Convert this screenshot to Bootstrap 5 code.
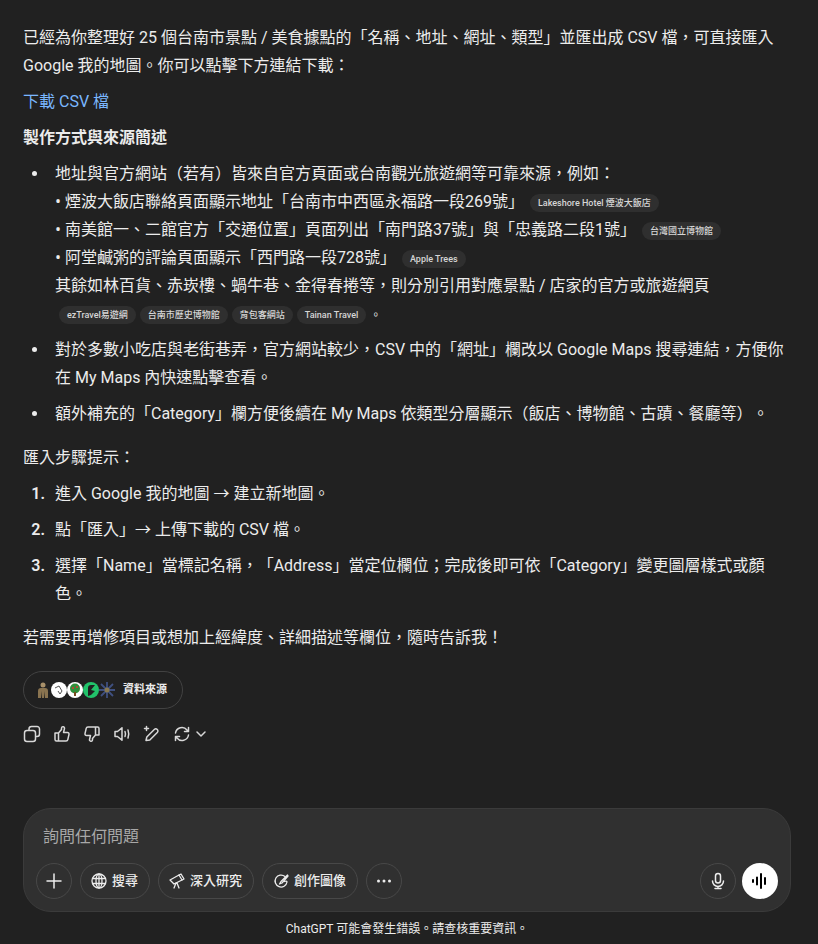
<!DOCTYPE html>
<html lang="zh-Hant">
<head>
  <meta charset="UTF-8" />
  <meta name="viewport" content="width=device-width, initial-scale=1.0"/>
  <title>ChatGPT</title>
  <link rel="stylesheet" href="https://cdn.jsdelivr.net/npm/bootstrap@5.3.2/dist/css/bootstrap.min.css">
  <style>
    html, body {
      height: 944px;
      overflow: hidden;
    }
    body {
      background-color: #212121;
      color: #ececec;
      font-family: Roboto, "Noto Sans CJK TC", sans-serif;
      font-size: 16px;
      line-height: 28px;
      text-spacing-trim: space-all;
    }
    .chat-page {
      height: 944px;
      padding: 24px 27px 0 23px;
    }
    .para {
      margin-bottom: 8px;
      white-space: nowrap;
    }
    .src-link {
      color: #7ab7ff;
      text-decoration: none;
    }
    .bullets, .steps {
      padding-left: 26px;
      margin-bottom: 8px;
      white-space: nowrap;
    }
    .bullets li, .steps li {
      margin-bottom: 8px;
      padding-left: 6px;
    }
    .steps li::marker {
      font-weight: 600;
    }
    .dot-mark {
      font-family: "Open Sans", sans-serif;
      line-height: 1;
    }
    .tail-mark {
      font-size: 11px;
      line-height: 1;
    }
    .source-chip {
      display: inline-flex;
      align-items: center;
      height: 18px;
      padding: 0 8px;
      margin-left: 2px;
      border-radius: 9px;
      background-color: #2f2f2f;
      color: #d6d6d6;
      font-size: 9px;
      line-height: 18px;
      font-weight: 500;
      vertical-align: 1px;
    }
    .chip-tight {
      margin-left: 0;
    }
    .sources-btn {
      width: 160px;
      height: 38px;
      margin-top: 11px;
      padding-left: 11px;
      border: 1px solid #424242;
      border-radius: 19px;
      font-size: 11px;
      font-weight: 600;
      color: #ececec;
    }
    .fav {
      width: 16px;
      height: 16px;
      flex: none;
    }
    .action-row {
      margin-top: 16px;
      height: 18px;
      gap: 12px;
    }
    .composer {
      margin-top: auto;
      height: 104px;
      background-color: #303030;
      border: 1px solid #3b3b3b;
      border-radius: 28px;
      padding: 14px 12px 12px;
    }
    .ask-text {
      padding-left: 7px;
      color: #a8a8a8;
      height: 28px;
      line-height: 28px;
    }
    .tool-row {
      margin-top: 12px;
      gap: 8px;
    }
    .tool-btn {
      height: 36px;
      border: 1px solid #484848;
      border-radius: 18px;
      color: #ececec;
      font-size: 13px;
      font-weight: 500;
      gap: 5px;
      padding: 0 11px 0 10px;
    }
    .round-btn {
      width: 36px;
      padding: 0;
      justify-content: center;
    }
    .voice-btn {
      width: 36px;
      height: 36px;
      margin-left: -2px;
      border-radius: 50%;
      background-color: #fff;
    }
    .disclaimer {
      height: 32px;
      line-height: 34px;
      font-size: 12px;
      text-align: center;
      color: #ececec;
    }
  </style>
</head>
<body>

<div class="chat-page d-flex flex-column">
  <p class="para">已經為你整理好 25 個台南市景點 / 美食據點的「名稱、地址、網址、類型」並匯出成 CSV 檔，可直接匯入<br>Google 我的地圖。你可以點擊下方連結下載：</p>
  <p class="para"><a class="src-link" href="#">下載 CSV 檔</a></p>
  <p class="para fw-semibold">製作方式與來源簡述</p>

  <ul class="bullets">
    <li>地址與官方網站（若有）皆來自官方頁面或台南觀光旅遊網等可靠來源，例如：<br>
      <span class="dot-mark">•</span> 煙波大飯店聯絡頁面顯示地址「台南市中西區永福路一段269號」 <span class="source-chip">Lakeshore Hotel 煙波大飯店</span><br>
      <span class="dot-mark">•</span> 南美館一、二館官方「交通位置」頁面列出「南門路37號」與「忠義路二段1號」 <span class="source-chip">台灣國立博物館</span><br>
      <span class="dot-mark">•</span> 阿堂鹹粥的評論頁面顯示「西門路一段728號」 <span class="source-chip">Apple Trees</span><br>
      其餘如林百貨、赤崁樓、蝸牛巷、金得春捲等，則分別引用對應景點 / 店家的官方或旅遊網頁<br>
      <span class="source-chip chip-tight ms-1">ezTravel易遊網</span> <span class="source-chip chip-tight">台南市歷史博物館</span> <span class="source-chip chip-tight">背包客網站</span> <span class="source-chip chip-tight">Tainan Travel</span> <span class="tail-mark">。</span></li>
    <li>對於多數小吃店與老街巷弄，官方網站較少，CSV 中的「網址」欄改以 Google Maps 搜尋連結，方便你<br>在 My Maps 內快速點擊查看。</li>
    <li>額外補充的「Category」欄方便後續在 My Maps 依類型分層顯示（飯店、博物館、古蹟、餐廳等）。</li>
  </ul>

  <p class="para">匯入步驟提示：</p>

  <ol class="steps">
    <li>進入 Google 我的地圖 → 建立新地圖。</li>
    <li>點「匯入」→ 上傳下載的 CSV 檔。</li>
    <li>選擇「Name」當標記名稱，「Address」當定位欄位；完成後即可依「Category」變更圖層樣式或顏<br>色。</li>
  </ol>

  <p class="para">若需要再增修項目或想加上經緯度、詳細描述等欄位，隨時告訴我！</p>

  <div class="sources-btn d-flex align-items-center">
    <svg class="fav" viewBox="0 0 16 16"><circle cx="8" cy="3" r="2.500" fill="#a8906a"/><path d="M6 6h4q3 0 3 3v7h-3V9l-1 7H7L6 9v7H3V9q0-3 3-3z" fill="#8a7450"/></svg>
    <svg class="fav" viewBox="0 0 16 16"><circle cx="8" cy="8" r="8" fill="#fff"/><path d="M4 6l4-2 3 5-2 3-2-3" fill="none" stroke="#555" stroke-width="1"/></svg>
    <svg class="fav" viewBox="0 0 16 16"><circle cx="8" cy="8" r="8" fill="#fff"/><circle cx="8" cy="6.500" r="5" fill="#2f8f3a"/><rect x="7" y="10" width="2" height="4" fill="#7a4a20"/><circle cx="6" cy="6" r="1" fill="#d33"/><circle cx="10" cy="5" r="1" fill="#d33"/></svg>
    <svg class="fav" viewBox="0 0 16 16"><circle cx="8" cy="8" r="8" fill="#22c36b"/><path d="M5 14V6q0-3 3-3h4L8 8l4 1-4 4z" fill="#212121"/></svg>
    <svg class="fav" viewBox="0 0 16 16"><g stroke="#3f5080" stroke-width="1.800"><path d="M8 0v16M0 8h16M2 2l12 12M14 2L2 14"/></g><circle cx="8" cy="8" r="2.500" fill="#8a7a50"/></svg>
    <span class="ms-2">資料來源</span>
  </div>

  <div class="action-row d-flex align-items-center">
    <svg width="18" height="18" viewBox="0 0 18 18" fill="none" stroke="#d8d8d8" stroke-width="1.500" stroke-linejoin="round"><rect x="1.500" y="5.500" width="11" height="11" rx="2.500"/><path d="M6 5V4a2.500 2.500 0 0 1 2.500-2.500h5A2.500 2.500 0 0 1 16.500 4v5a2.500 2.500 0 0 1-2.500 2.500H13"/></svg>
    <svg width="18" height="18" viewBox="0 0 18 18" fill="none" stroke="#d8d8d8" stroke-width="1.500" stroke-linejoin="round"><path d="M5.500 7.500V16M2 8h3.500v8H3.500a1.500 1.500 0 0 1-1.500-1.500zM5.500 8l3-3.500V3a1.500 1.500 0 0 1 3 .500L10.500 7.500H14.500a1.500 1.500 0 0 1 1.500 1.800l-1.200 5.300a1.800 1.800 0 0 1-1.800 1.400H5.500"/></svg>
    <svg width="18" height="18" viewBox="0 0 18 18" fill="none" stroke="#d8d8d8" stroke-width="1.500" stroke-linejoin="round"><path d="M12.500 10.500V2M16 10h-3.500V2h2A1.500 1.500 0 0 1 16 3.500zM12.500 10l-3 3.500V15a1.500 1.500 0 0 1-3-.500L7.500 10.500H3.500a1.500 1.500 0 0 1-1.500-1.800L3.200 3.400A1.800 1.800 0 0 1 5 2h7.500"/></svg>
    <svg width="18" height="18" viewBox="0 0 18 18" fill="none" stroke="#d8d8d8" stroke-width="1.500" stroke-linejoin="round" stroke-linecap="round"><path d="M2 6.500h2.500L9 2.800v12.400L4.500 11.500H2z"/><path d="M12 6.500q1 2.500 0 5M15 5q1.500 4 0 8"/></svg>
    <svg width="18" height="18" viewBox="0 0 18 18" fill="none" stroke="#d8d8d8" stroke-width="1.500" stroke-linejoin="round" stroke-linecap="round"><path d="M3 15.500l.8-3.500 7.500-7.500a2 2 0 0 1 3 3L6.800 15z"/><path d="M3.500 1.500v4M1.500 3.500h4"/></svg>
    <span class="d-flex align-items-center gap-1">
      <svg width="18" height="18" viewBox="0 0 18 18" fill="none" stroke="#d8d8d8" stroke-width="1.500" stroke-linejoin="round" stroke-linecap="round"><path d="M2.500 8a6.500 6.500 0 0 1 11.500-3l1.500 1.500M15.500 2.500v4h-4M15.500 10a6.500 6.500 0 0 1-11.500 3L2.500 11.500M2.500 15.500v-4h4"/></svg>
      <svg width="12" height="12" viewBox="0 0 12 12" fill="none" stroke="#d8d8d8" stroke-width="1.500" stroke-linecap="round" stroke-linejoin="round"><path d="M2 4l4 4 4-4"/></svg>
    </span>
  </div>

  <div class="composer">
    <div class="ask-text">詢問任何問題</div>
    <div class="tool-row d-flex align-items-center">
      <div class="tool-btn round-btn d-flex align-items-center">
        <svg width="18" height="18" viewBox="0 0 18 18" fill="none" stroke="#ececec" stroke-width="1.500" stroke-linecap="round"><path d="M9 2v14M2 9h14"/></svg>
      </div>
      <div class="tool-btn d-flex align-items-center">
        <svg width="16" height="16" viewBox="0 0 16 16" fill="none" stroke="#ececec" stroke-width="1.300"><circle cx="8" cy="8" r="7"/><ellipse cx="8" cy="8" rx="3" ry="7"/><path d="M1 5.500h14M1 10.500h14M8 1v14"/></svg>
        <span>搜尋</span>
      </div>
      <div class="tool-btn d-flex align-items-center">
        <svg width="16" height="16" viewBox="0 0 16 16" fill="none" stroke="#ececec" stroke-width="1.300" stroke-linejoin="round" stroke-linecap="round"><path d="M1 7l9-5 3 5-8 4z"/><path d="M10 2l2-1 3 5-2 1M7 10l-2 5M8 10l2 5"/></svg>
        <span>深入研究</span>
      </div>
      <div class="tool-btn d-flex align-items-center">
        <svg width="16" height="16" viewBox="0 0 16 16" fill="none" stroke="#ececec" stroke-width="1.300" stroke-linecap="round" stroke-linejoin="round"><path d="M12 3.500A6 6 0 1 0 14 9c0-1-1.500-1-2.500-.500"/><path d="M14.500 2L8 8.500 6.500 11 9 10l6-7z"/></svg>
        <span>創作圖像</span>
      </div>
      <div class="tool-btn round-btn d-flex align-items-center">
        <svg width="16" height="16" viewBox="0 0 16 16" fill="#ececec"><circle cx="2.500" cy="8" r="1.500"/><circle cx="8" cy="8" r="1.500"/><circle cx="13.500" cy="8" r="1.500"/></svg>
      </div>
      <div class="tool-btn round-btn d-flex align-items-center ms-auto">
        <svg width="18" height="18" viewBox="0 0 18 18" fill="none" stroke="#ececec" stroke-width="1.500" stroke-linecap="round"><rect x="6.500" y="1.500" width="5" height="9.500" rx="2.500"/><path d="M3.500 9a5.500 5.500 0 0 0 11 0M9 14.500v2M6 16.500h6"/></svg>
      </div>
      <div class="voice-btn d-flex align-items-center justify-content-center">
        <svg width="18" height="18" viewBox="0 0 18 18" stroke="#000" stroke-width="2" stroke-linecap="round"><path d="M2 8v2M6 5.500v7M10 2v14M14 6v6"/></svg>
      </div>
    </div>
  </div>

  <div class="disclaimer">ChatGPT 可能會發生錯誤。請查核重要資訊。</div>
</div>

</body>
</html>
